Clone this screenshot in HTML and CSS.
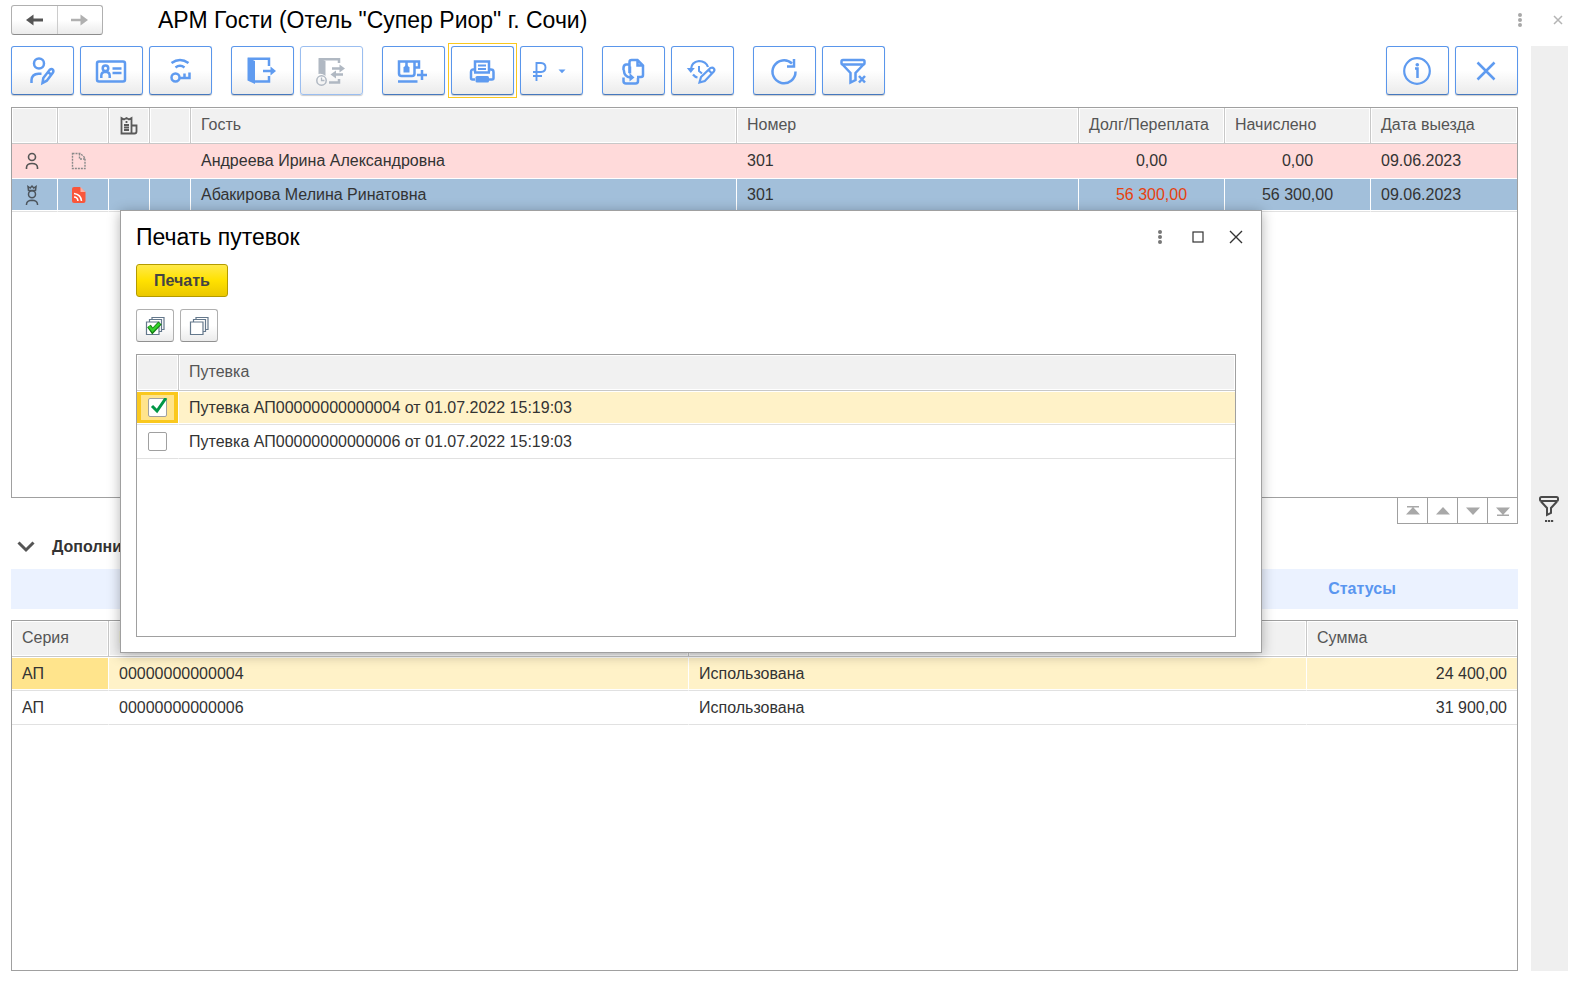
FILE: index.html
```html
<!DOCTYPE html>
<html lang="ru">
<head>
<meta charset="utf-8">
<title>АРМ Гости</title>
<link rel="stylesheet" href="styles.css">
</head>
<body>
<div class="app">
  <header class="titlebar">
    <div class="history">
      <button type="button" aria-label="Назад"><svg width="20" height="16" viewBox="0 0 20 16" fill="none" stroke="#555" stroke-width="3"><path d="M18 8H4"/><path d="M8.500 2.500L1 8l7.500 5.500z" fill="#555" stroke="none"/></svg></button>
      <button type="button" aria-label="Вперед" disabled><svg width="20" height="16" viewBox="0 0 20 16" fill="none" stroke="#b0b0b0" stroke-width="2.500"><path d="M1 8H15"/><path d="M10.500 2.500L18 8l-7.500 5.500z" fill="#b0b0b0" stroke="none"/></svg></button>
    </div>
    <h1 class="title">АРМ Гости (Отель "Супер Риор" г. Сочи)</h1>
    <button type="button" class="plain" aria-label="Меню"><svg width="16" height="16" viewBox="0 0 16 16" fill="#a8a8a8"><circle cx="8" cy="3" r="2"/><circle cx="8" cy="8" r="2"/><circle cx="8" cy="13" r="2"/></svg></button>
    <button type="button" class="plain" aria-label="Закрыть"><svg width="16" height="16" viewBox="0 0 16 16" fill="none" stroke="#b4b4b4" stroke-width="1.500"><path d="M4 4l8 8M12 4l-8 8"/></svg></button>
  </header>

  <div class="workspace">
    <main class="main">
      <div class="toolbar">
        <div class="group">
          <button type="button" class="tool" aria-label="Изменить гостя"><svg class="icon" viewBox="0 0 32 32"><circle cx="13" cy="8.500" r="5"/><path d="M5.500 28v-3q.3-6 7-6.300h3"/><path d="M16.500 28l.8-5 6.200-8q2-1.800 3.300-.4 1.200 1.300 0 3.200l-6 7.900zM22 17l3 2.500"/></svg></button>
          <button type="button" class="tool" aria-label="Карта гостя"><svg class="icon" viewBox="0 0 32 32"><rect x="2" y="6.500" width="28" height="20" rx="2"/><circle cx="10.500" cy="13.300" r="2.800"/><path d="M6.300 23v-2.500q.2-3.500 4.200-3.700 4 .2 4.200 3.700V23M17.500 13.500h9M17.500 18h9"/></svg></button>
          <button type="button" class="tool" aria-label="Ключ"><svg class="icon" viewBox="0 0 32 32"><path d="M7.500 8q8.500-6 17 0M11.500 12.500q4.500-3.500 9 0"/><circle cx="11.500" cy="22.500" r="4"/><path d="M15.500 23H25.500V17.500M20.500 22.500v-4"/></svg></button>
        </div>
        <div class="group">
          <button type="button" class="tool" aria-label="Выезд"><svg class="icon" viewBox="0 0 32 32"><path d="M1.500 2.500L9 6v23l-7.500-3.500z" class="solid"/><path d="M2 3.800H23V11M23 21v5.500H8"/><path d="M17 16H25"/><path d="M24.500 11.500L30 16l-5.500 4.500z" class="solid"/></svg></button>
          <button type="button" class="tool" aria-label="Переселение" disabled><svg class="icon" viewBox="0 0 32 32"><path d="M3.500 3l7 3v15Q7 18 3.500 19z" class="solid"/><path d="M4 4.300H24V8M24 24v3.500H14"/><circle cx="6.500" cy="25.500" r="4.700" stroke-width="1.500"/><path d="M6.500 22.500v3h3" stroke-width="1.300"/><path d="M17 13.500h9M20 19.500h8"/><path d="M24.500 9.500l5.500 4-5.500 4zM21 15.500l-5.500 4 5.500 4z" class="solid"/></svg></button>
        </div>
        <div class="group">
          <button type="button" class="tool" aria-label="Добавить услугу"><svg class="icon" viewBox="0 0 32 32"><path d="M2 6.500h15.500v12q0 2.500-2.500 2.500H4.500Q2 21 2 18.500zM17.500 6.500H22v6h-4.500M9.500 6v5"/><path d="M6.500 17.500v-5l3-3 3 3v5z" class="solid"/><path d="M1 26.500H20.500M25 15v10M20 20h10"/></svg></button>
          <button type="button" class="tool focused" aria-label="Печать"><svg class="icon" viewBox="0 0 32 32"><path d="M9 17V6.500h14V17"/><path d="M8 14.500Q5 14 5 17v6q0 1.500 1.500 1.500H9M24 14.500q3.500-.5 3.500 2.500v6q0 1.500-1.500 1.500h-3M8 17.500h16"/><path d="M12 10.500h8M12 14h8" stroke-width="1.800"/><rect x="9.500" y="21" width="13.500" height="6.500" rx="1.500" class="solid"/></svg></button>
          <button type="button" class="tool" aria-label="Оплата"><svg class="icon wide" viewBox="0 0 40 32"><path d="M5.500 26V8h4.500q4.500.3 4.500 4.500T10 17H2M2 21h9" stroke-width="1.900"/><path d="M27.500 14.500h7l-3.500 3.800z" class="solid"/></svg></button>
        </div>
        <div class="group">
          <button type="button" class="tool" aria-label="Документы"><svg class="icon" viewBox="0 0 32 32"><path d="M12.500 18V7q0-2 2-2H20.500l5.500 5.500V20q0 2-2 2h-4M20.500 5v5.500H26"/><path d="M12 9.500H9Q6.500 10 6.500 13v2M6.500 22.500V26q0 2.500 2.500 2.500h9.500q2.500 0 2.500-2.500v-3M6.800 15q.4 7 6.700 7.500h2M13 11.500v7"/><path d="M12.500 18l5 4.500-5 4z" class="solid"/></svg></button>
          <button type="button" class="tool" aria-label="История изменений"><svg class="icon" viewBox="0 0 32 32"><path d="M5 14Q5.500 7 13 6q7 .3 9 6M7 19.500q2 2.500 4.500 3" stroke-width="2.200"/><path d="M.800 13h8l-4 5z" class="solid"/><path d="M13 11v5l3 2.500" stroke-width="2"/><path d="M13.500 27.500l1.500-5.500 9.500-9q2-1 3.300.4t0 3.100l-9 9.500zM22 14.500l4 4" stroke-width="2.200"/></svg></button>
        </div>
        <div class="group">
          <button type="button" class="tool" aria-label="Обновить"><svg class="icon" viewBox="0 0 32 32"><path d="M27.500 16.500A11.500 11.500 0 1 1 24 8.500"/><path d="M26 4v7.500h-7"/></svg></button>
          <button type="button" class="tool" aria-label="Сбросить отбор"><svg class="icon" viewBox="0 0 32 32"><rect x="4.500" y="5" width="23" height="4.500" rx="1.500"/><path d="M5.500 9.500l8 8.500v9.500l5-2.500v-7l8-8.500"/><path d="M22 21l6 6.500M28 21l-6 6.500"/></svg></button>
        </div>
        <div class="group right">
          <button type="button" class="tool" aria-label="Информация"><svg class="icon" viewBox="0 0 32 32"><circle cx="16" cy="16" r="12.800" stroke-width="2.200"/><path d="M14 13.500h2.500v9.500"/><circle cx="16.300" cy="9.800" r="1.800" class="solid"/></svg></button>
          <button type="button" class="tool" aria-label="Закрыть форму"><svg class="icon" viewBox="0 0 32 32"><path d="M7.500 7.500l17 17M24.500 7.500l-17 17"/></svg></button>
        </div>
      </div>

      <section class="grid guests">
        <table class="data">
          <colgroup><col class="w-46"><col class="w-51"><col class="w-41"><col class="w-41"><col><col class="w-342"><col class="w-146"><col class="w-146"><col class="w-146"></colgroup>
          <thead><tr>
            <th></th><th></th>
            <th class="glyph"><svg width="20" height="20" viewBox="0 0 20 20" fill="none" stroke="#5a5a5a" stroke-width="1.800"><path d="M2.500 17.500V2l2.500 1.500L7.500 2 10 3.500 12.500 2v15.500zM12.500 9.500H17.500v6q0 2-2 2H2.500M5 9h5M5 11.500h5M5 14h5M7.500 5v2"/></svg></th>
            <th></th><th>Гость</th><th>Номер</th><th>Долг/Переплата</th><th>Начислено</th><th>Дата выезда</th>
          </tr></thead>
          <tbody>
            <tr class="pink">
              <td class="glyph start"><svg width="16" height="20" viewBox="0 0 16 20" fill="none" stroke="#555" stroke-width="1.600"><circle cx="8" cy="6" r="3.500"/><path d="M2.500 18v-1.500q.2-4 5.500-4t5.500 4V18"/></svg></td>
              <td class="glyph shift"><svg width="16" height="20" viewBox="0 0 16 20" fill="none" stroke="#8a8a8a" stroke-width="1.400" stroke-dasharray="2 1"><path d="M1.500 2.500h8l4.500 4.500v10.500H1.500zM8.500 2.500V8H14"/></svg></td>
              <td></td><td></td><td>Андреева Ирина Александровна</td><td>301</td><td class="mid">0,00</td><td class="mid">0,00</td><td>09.06.2023</td>
            </tr>
            <tr class="blue">
              <td class="glyph start"><svg width="16" height="22" viewBox="0 0 16 22" fill="none" stroke="#4c545c" stroke-width="1.500"><path d="M4.500 6.500L4 2.500l2.200 1.500L8 2l1.800 2L12 2.500l-.5 4z"/><circle cx="8" cy="10.300" r="3.500"/><path d="M2.500 21v-1q.5-3.500 5.500-3.700 5 .2 5.500 3.700v1"/></svg></td>
              <td class="glyph shift"><svg width="16" height="20" viewBox="0 0 16 20"><path d="M3 2h6l5.500 5v9q0 2-2 2H3q-2 0-2-2V4q0-2 2-2z" fill="#f9563b"/><path d="M9.500 2v5h5z" fill="#fbb0a4"/><path d="M3 8.500q7 1 7.500 7.500M3 12q3.500 0 4 4" fill="none" stroke="#fff" stroke-width="1.500"/></svg></td>
              <td></td><td></td><td>Абакирова Мелина Ринатовна</td><td>301</td><td class="mid debt">56 300,00</td><td class="mid">56 300,00</td><td>09.06.2023</td>
            </tr>
          </tbody>
        </table>
      </section>

      <div class="pager">
        <button type="button" aria-label="В начало"><svg width="14" height="10" viewBox="0 0 14 10" fill="#a8a8a8"><path d="M1 0h12v1.500H1zM7 1l7 7.500H0z"/></svg></button>
        <button type="button" aria-label="Вверх"><svg width="14" height="10" viewBox="0 0 14 10" fill="#a8a8a8"><path d="M7 1l7 7.500H0z"/></svg></button>
        <button type="button" aria-label="Вниз"><svg width="14" height="10" viewBox="0 0 14 10" fill="#a8a8a8"><path d="M0 1.500h14L7 9z"/></svg></button>
        <button type="button" aria-label="В конец"><svg width="14" height="10" viewBox="0 0 14 10" fill="#a8a8a8"><path d="M0 1.500h14L7 9zM1 8.500h12V10H1z"/></svg></button>
      </div>

      <h2 class="section"><svg width="18" height="12" viewBox="0 0 18 12" fill="none" stroke="#555" stroke-width="3"><path d="M1.500 1.500L9 9l7.500-7.500"/></svg>Дополнительно</h2>

      <nav class="tabs"><button type="button">Статусы</button></nav>

      <section class="grid vouchers">
        <table class="data">
          <colgroup><col class="w-97"><col class="w-580"><col><col class="w-210"></colgroup>
          <thead><tr><th>Серия</th><th>Номер</th><th>Статус</th><th>Сумма</th></tr></thead>
          <tbody>
            <tr class="yellow"><td class="current">АП</td><td>00000000000004</td><td>Использована</td><td class="num">24 400,00</td></tr>
            <tr><td>АП</td><td>00000000000006</td><td>Использована</td><td class="num">31 900,00</td></tr>
          </tbody>
        </table>
      </section>
    </main>

    <aside class="side">
      <button type="button" class="plain" aria-label="Отбор"><svg width="24" height="30" viewBox="0 0 24 30" fill="none" stroke="#4a4a4a" stroke-width="2"><rect x="2" y="3" width="18" height="4" rx="1.500"/><path d="M3 7.500l6 6.500v7l4-2v-5l6-6.500"/><path d="M7 27h2.200M10 27h2.200M13 27h2.200"/></svg></button>
    </aside>
  </div>

  <div class="dialog" role="dialog" aria-labelledby="dialog-title">
    <div class="dialog-head">
      <h2 class="title" id="dialog-title">Печать путевок</h2>
      <button type="button" class="plain" aria-label="Меню окна"><svg width="16" height="16" viewBox="0 0 16 16" fill="#777"><circle cx="8" cy="3" r="2"/><circle cx="8" cy="8" r="2"/><circle cx="8" cy="13" r="2"/></svg></button>
      <button type="button" class="plain" aria-label="Развернуть"><svg width="16" height="16" viewBox="0 0 16 16" fill="none" stroke="#333" stroke-width="1.200"><rect x="3" y="3" width="10" height="10"/></svg></button>
      <button type="button" class="plain" aria-label="Закрыть окно"><svg width="16" height="16" viewBox="0 0 16 16" fill="none" stroke="#333" stroke-width="1.400"><path d="M2 2l12 12M14 2L2 14"/></svg></button>
    </div>
    <button type="button" class="print">Печать</button>
    <div class="marks">
      <button type="button" class="mark" aria-label="Отметить все"><svg width="20" height="20" viewBox="0 0 20 20" fill="#fff" stroke="#64788c" stroke-width="1.200"><path d="M7 1.500h12v12H7z"/><path d="M4.500 3.500h12v12h-12z"/><path d="M1.500 6h12.500v12.500H1.500z"/><path d="M4 10l3.500 5L15 7" fill="none" stroke="#127a12" stroke-width="4.500"/><path d="M4 10.200l3.500 4.300L14.500 7.500" fill="none" stroke="#34d12c" stroke-width="2.500"/></svg></button>
      <button type="button" class="mark" aria-label="Снять отметки"><svg width="20" height="20" viewBox="0 0 20 20" fill="#fff" stroke="#64788c" stroke-width="1.200"><path d="M7 1.500h12v12H7z"/><path d="M4.500 3.500h12v12h-12z"/><path d="M1.500 6h12.500v12.500H1.500z"/></svg></button>
    </div>
    <div class="grid dialog-grid">
      <table class="data">
        <colgroup><col class="w-42"><col></colgroup>
        <thead><tr><th></th><th>Путевка</th></tr></thead>
        <tbody>
          <tr class="yellow"><td class="pick focus-cell"><span class="check"><input type="checkbox" id="v4" checked><svg width="20" height="20" viewBox="0 0 20 20" fill="none" stroke="#009646" stroke-width="3"><path d="M4 8l5 5L18 0"/></svg></span></td><td><label for="v4">Путевка АП00000000000004 от 01.07.2022 15:19:03</label></td></tr>
          <tr><td class="pick"><span class="check"><input type="checkbox" id="v6"></span></td><td><label for="v6">Путевка АП00000000000006 от 01.07.2022 15:19:03</label></td></tr>
        </tbody>
      </table>
    </div>
  </div>
</div>
</body>
</html>
```
FILE: styles.css
```css
* { box-sizing: border-box; }
body {
  margin: 0;
  background: #fff;
  color: #333;
  font: 16px/20px "Liberation Sans", Arial, sans-serif;
}
button { font: inherit; padding: 0; margin: 0; }
svg { display: block; }

.app {
  position: relative;
  display: flex;
  flex-direction: column;
  min-height: 100vh;
  padding-bottom: 10px;
}

.titlebar {
  display: flex;
  align-items: center;
  gap: 22px;
  height: 46px;
  padding: 0 16px 6px 11px;
}
.history {
  display: flex;
  height: 30px;
  margin-right: 33px;
  border: 1px solid #b0b0b0;
  border-bottom-color: #8c8c8c;
  border-radius: 3px;
  background: linear-gradient(#fff 50%, #ebebeb);
}
.history button {
  display: flex;
  align-items: center;
  justify-content: center;
  width: 45px;
  border: 0;
  background: none;
}
.history button + button { border-left: 1px solid #ccc; }
.title {
  flex: 1;
  margin: 0;
  color: #000;
  font-size: 23px;
  line-height: 28px;
  font-weight: normal;
}
.plain { border: 0; background: none; }

.workspace { display: flex; flex: 1; gap: 13px; padding: 0 14px 0 11px; }
.main { display: flex; flex: 1; flex-direction: column; min-width: 0; }
.side { display: flex; align-items: center; justify-content: center; width: 37px; background: #efefef; }

.toolbar { display: flex; gap: 19px; margin-bottom: 12px; }
.group { display: flex; gap: 6px; }
.right { margin-left: auto; }
.tool {
  position: relative;
  display: flex;
  align-items: center;
  justify-content: center;
  width: 63px;
  height: 49px;
  padding-right: 2px;
  border: 1px solid #5a96eb;
  border-bottom-color: #4678be;
  border-radius: 3px;
  background: linear-gradient(#fff 50%, #ebebeb);
  box-shadow: 0 1px 1px #ccc;
  color: #5f9bf0;
}
.tool:disabled { border-color: #9bbef0; color: #b0b8c2; }
.focused::after { content: ""; position: absolute; inset: -4px; border: 1px solid #fac81e; }
.icon { width: 32px; height: 32px; fill: none; stroke: currentColor; stroke-width: 2.5; }
.wide { width: 40px; }
.solid { fill: currentColor; stroke: none; }

.grid { border: 1px solid #a0a0a0; background: #fff; }
.guests { height: 391px; }
.vouchers { flex: 1; }
.dialog-grid { height: 283px; }

.data { width: 100%; table-layout: fixed; border-collapse: separate; border-spacing: 0; }
.data th, .data td { overflow: hidden; padding: 0 10px; text-align: left; white-space: nowrap; }
.data th {
  height: 36px;
  padding-bottom: 1px;
  border-right: 1px solid #c8c8c8;
  border-bottom: 1px solid #c8c8c8;
  background: #f1f1f1;
  box-shadow: inset 0 0 0 1px #fff;
  color: #555;
  font-weight: normal;
}
.data td { height: 34px; border-right: 1px solid transparent; border-bottom: 1px solid #e1e1e1; }
.data th:last-child, .data td:last-child { border-right: 0; }
.data .pink td { border-color: #ffdada; background: #ffdada; }
.data .blue td { border-right-color: #fff; background: #a2bfda; box-shadow: inset 0 1px #fff, inset 0 -1px #fff; }
.data .yellow td { border-right-color: #fff; background: #fff2c8; box-shadow: inset 0 1px #fff, inset 0 -1px #fff; }
.data .yellow .current { background: #ffe48c; }
.data .glyph { padding: 0; }
.glyph svg { margin: 0 auto; }
.start svg { margin-left: 12px; }
.shift svg { margin-left: 13px; }
.data .mid { text-align: center; }
.data .num { text-align: right; }
.data .debt { color: #e6420f; }

.w-41 { width: 41px; }
.w-42 { width: 42px; }
.w-46 { width: 46px; }
.w-51 { width: 51px; }
.w-97 { width: 97px; }
.w-146 { width: 146px; }
.w-210 { width: 210px; }
.w-342 { width: 342px; }
.w-580 { width: 580px; }

.pager { display: flex; align-self: flex-end; height: 27px; margin-top: -1px; border: 1px solid #a0a0a0; }
.pager button {
  display: flex;
  align-items: center;
  justify-content: center;
  width: 30px;
  border: 0;
  border-right: 1px solid #a0a0a0;
  background: #fff;
}
.pager button:last-child { width: 29px; border-right: 0; }

.section {
  display: flex;
  align-items: center;
  gap: 17px;
  height: 45px;
  margin: 0;
  padding-left: 6px;
  font-size: 16px;
}
.tabs { display: flex; justify-content: flex-end; height: 40px; margin-bottom: 11px; background: #ebf2ff; }
.tabs button { width: 312px; border: 0; background: none; color: #5a96f0; font-weight: bold; }

.dialog {
  position: absolute;
  top: 210px;
  left: 120px;
  right: 320px;
  padding: 12px 25px 15px 15px;
  border: 1px solid #a0a0a0;
  background: #fff;
  box-shadow: 0 2px 12px rgba(0, 0, 0, 0.3);
}
.dialog-head { display: flex; align-items: center; gap: 22px; height: 28px; margin-bottom: 13px; }
.dialog-head .plain:last-child { margin-right: -8px; }
.print {
  display: block;
  width: 92px;
  height: 33px;
  margin-bottom: 12px;
  border: 1px solid #b49b00;
  border-radius: 3px;
  background: linear-gradient(#ffe94a, #ffe100 50%, #ebc800);
  color: #444;
  font-weight: bold;
}
.marks { display: flex; gap: 6px; margin-bottom: 12px; }
.mark {
  display: flex;
  align-items: center;
  justify-content: center;
  width: 38px;
  height: 33px;
  border: 1px solid #b0b0b0;
  border-bottom-color: #909090;
  border-radius: 3px;
  background: linear-gradient(#fff 50%, #ebebeb);
}
.data .pick { padding: 0; }
.data .yellow .focus-cell { background: #ffe48c; box-shadow: inset 0 1px #fff, inset 0 -1px #fff, inset 0 0 0 4px #fac81e; }
.check { position: relative; display: block; width: 19px; height: 19px; margin: 0 auto; }
.check input {
  display: block;
  appearance: none;
  width: 19px;
  height: 19px;
  margin: 0;
  border: 1px solid #a0a0a0;
  border-radius: 2px;
  background: #fff;
}
.check svg { position: absolute; top: 0; left: 0; pointer-events: none; }
```
